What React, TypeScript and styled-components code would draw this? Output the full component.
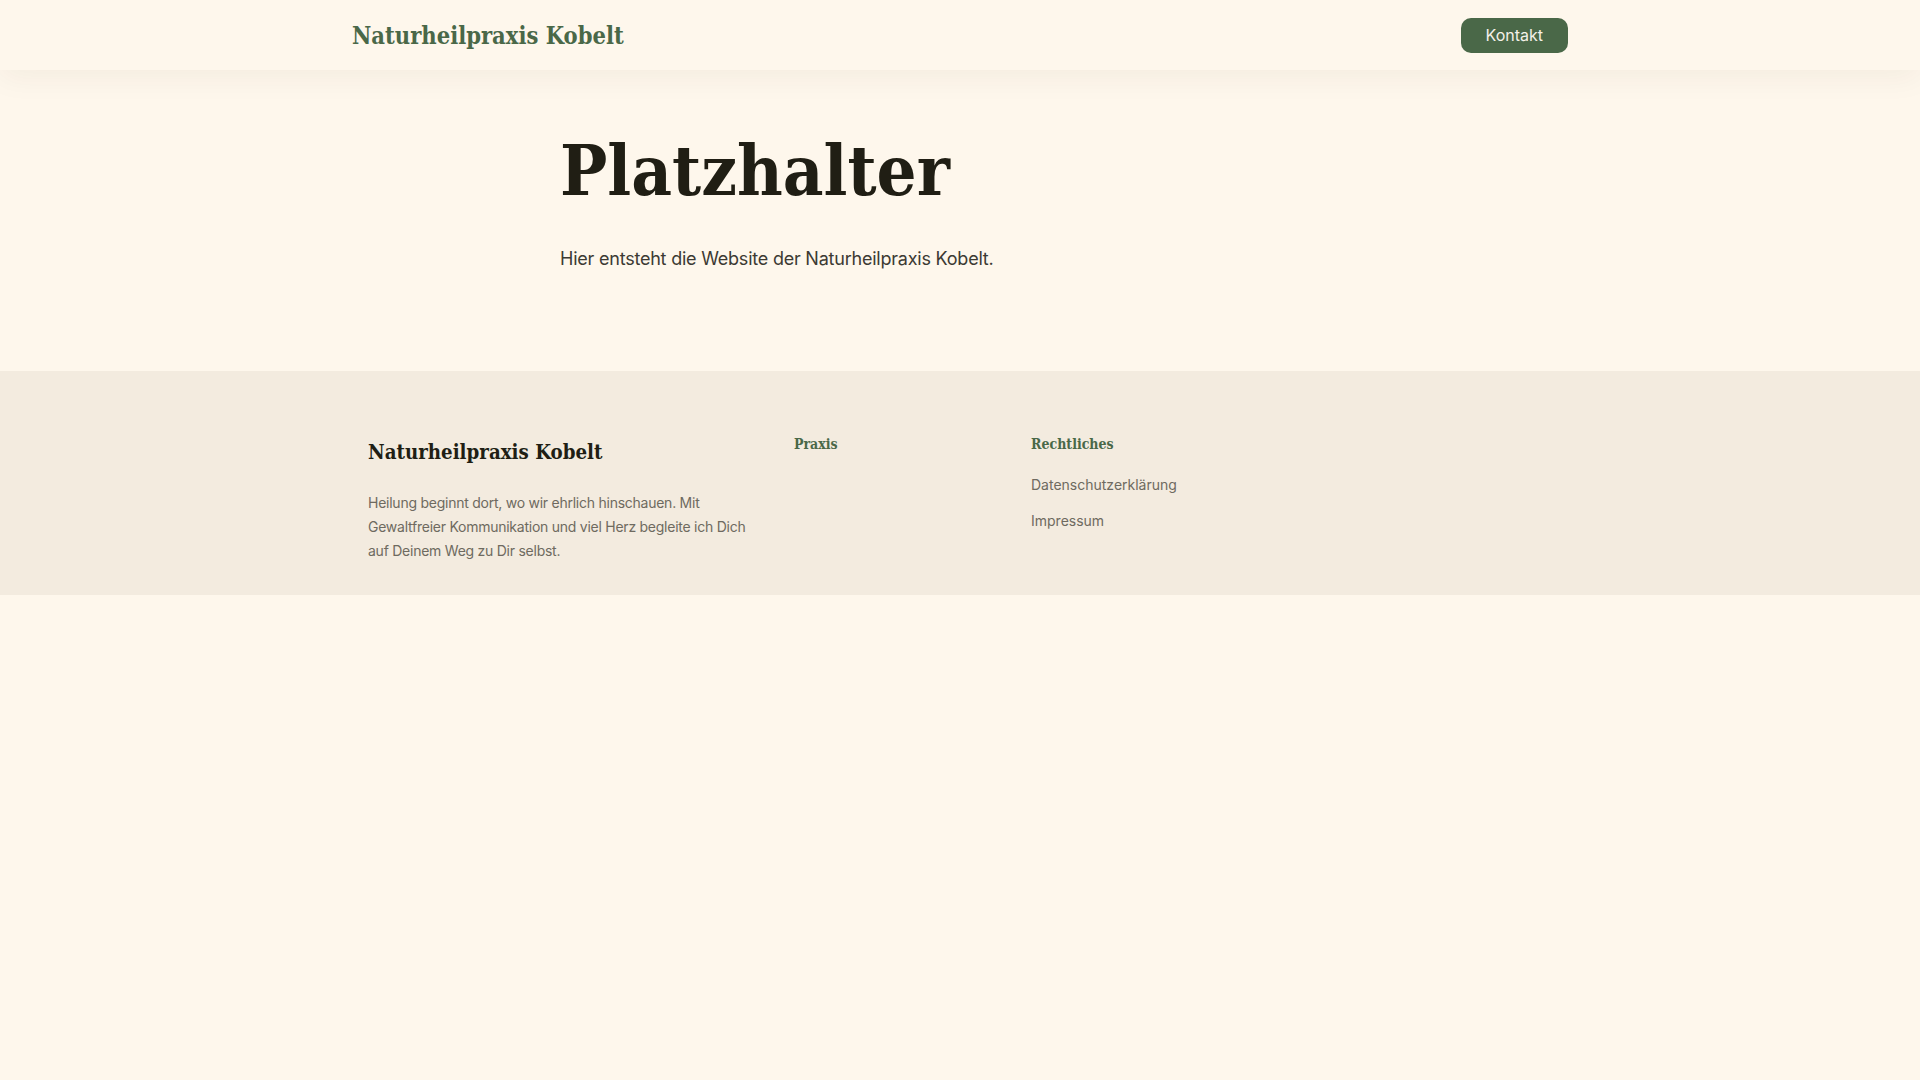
import styled, { createGlobalStyle } from 'styled-components';

const GlobalStyle = createGlobalStyle`
  html, body {
    margin: 0;
    padding: 0;
    background-color: #fef7ec;
  }
  body {
    font-family: Inter, "Open Sans", sans-serif;
    color: #201e14;
  }
  * {
    box-sizing: border-box;
  }
`;

export default function App() {
  return (
    <Page>
      <GlobalStyle />
      <Header>
        <HeaderInner>
          <Logo href="#">Naturheilpraxis Kobelt</Logo>
          <ContactButton href="#">Kontakt</ContactButton>
        </HeaderInner>
      </Header>

      <Hero>
        <HeroInner>
          <Title>Platzhalter</Title>
          <Lead>Hier entsteht die Website der Naturheilpraxis Kobelt.</Lead>
        </HeroInner>
      </Hero>

      <Footer>
        <FooterGrid>
          <div>
            <Brand>Naturheilpraxis Kobelt</Brand>
            <About>
              Heilung beginnt dort, wo wir ehrlich hinschauen. Mit Gewaltfreier Kommunikation und viel
              Herz begleite ich Dich auf Deinem Weg zu Dir selbst.
            </About>
          </div>
          <div>
            <ColumnTitle>Praxis</ColumnTitle>
          </div>
          <div>
            <ColumnTitle>Rechtliches</ColumnTitle>
            <LinkList>
              <li><FooterLink href="#">Datenschutzerklärung</FooterLink></li>
              <li><FooterLink href="#">Impressum</FooterLink></li>
            </LinkList>
          </div>
        </FooterGrid>
      </Footer>
    </Page>
  );
}

const serif = `"DejaVu Serif Condensed", "DejaVu Serif", "Liberation Serif", serif`;

const Page = styled.div`
  min-height: 100vh;
  background-color: #fef7ec;
`;

const Header = styled.header`
  height: 70px;
  background-color: #fef7ec;
  box-shadow: 0 8px 30px rgba(60, 40, 10, 0.05);
  position: relative;
  z-index: 1;
`;

const HeaderInner = styled.div`
  max-width: 1280px;
  height: 100%;
  margin: 0 auto;
  padding: 0 32px;
  display: flex;
  justify-content: space-between;
  align-items: center;
`;

const Logo = styled.a`
  font-family: ${serif};
  font-weight: 700;
  font-size: 23.5px;
  color: #4a6848;
  text-decoration: none;
  padding-top: 1px;
`;

const ContactButton = styled.a`
  display: inline-block;
  padding: 8px 25px;
  line-height: 19px;
  font-size: 16px;
  color: #f5f1e8;
  background-color: #4a6848;
  border-radius: 10px;
  text-decoration: none;
`;

const Hero = styled.section`
  padding: 62px 0 98px;
`;

const HeroInner = styled.div`
  max-width: 800px;
  margin: 0 auto;
`;

const Title = styled.h1`
  margin: 0;
  font-family: ${serif};
  font-weight: 700;
  font-size: 70px;
  line-height: 1.1;
  color: #201e14;
`;

const Lead = styled.p`
  margin: 36px 0 0;
  font-size: 18px;
  line-height: 28px;
  letter-spacing: -0.22px;
  color: #3c3a33;
`;

const Footer = styled.footer`
  background-color: #f3ebdf;
  padding: 61px 0 32px;
`;

const FooterGrid = styled.div`
  max-width: 1216px;
  margin: 0 auto;
  padding: 0 16px;
  display: grid;
  grid-template-columns: 378px 189px 189px 189px;
  column-gap: 48px;
  align-items: start;
`;

const Brand = styled.h3`
  margin: 0;
  font-family: ${serif};
  font-weight: 700;
  font-size: 20.3px;
  line-height: 40px;
  color: #201e14;
`;

const About = styled.p`
  margin: 19px 0 0;
  font-size: 14px;
  line-height: 24px;
  letter-spacing: -0.25px;
  color: #6e6a60;
`;

const ColumnTitle = styled.h4`
  margin: 0;
  font-family: ${serif};
  font-weight: 700;
  font-size: 14px;
  line-height: 24px;
  color: #4a6848;
`;

const LinkList = styled.ul`
  list-style: none;
  margin: 19px 0 0;
  padding: 0;
  display: flex;
  flex-direction: column;
  gap: 16px;
`;

const FooterLink = styled.a`
  display: block;
  font-size: 14px;
  line-height: 20px;
  color: #6e6a60;
  text-decoration: none;
`;
